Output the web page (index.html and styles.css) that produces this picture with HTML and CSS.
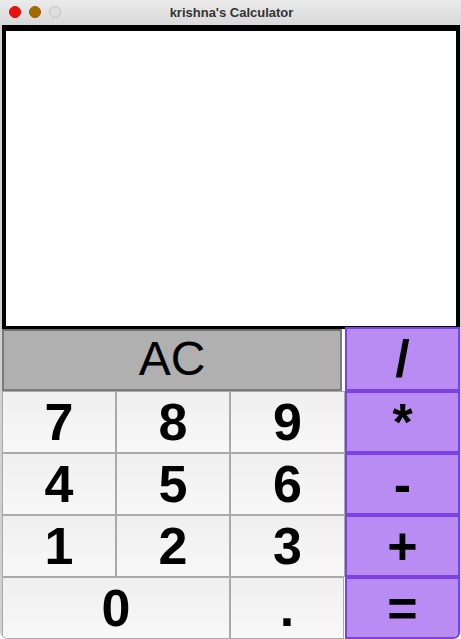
FILE: index.html
```html
<!DOCTYPE html>
<html>
<head>
<meta charset="utf-8">
<title>krishna's Calculator</title>
<link rel="stylesheet" href="styles.css">
</head>
<body>
<div class="window">
  <div class="titlebar">
    <div class="lights">
      <span class="light red"></span>
      <span class="light amber"></span>
      <span class="light off"></span>
    </div>
    <div class="title">krishna's Calculator</div>
  </div>
  <div class="content">
    <div class="display"></div>
    <div class="keys">
      <button class="key clear">AC</button>
      <button class="key op top">/</button>
      <button class="key num">7</button>
      <button class="key num">8</button>
      <button class="key num">9</button>
      <button class="key op">*</button>
      <button class="key num">4</button>
      <button class="key num">5</button>
      <button class="key num">6</button>
      <button class="key op">-</button>
      <button class="key num">1</button>
      <button class="key num">2</button>
      <button class="key num">3</button>
      <button class="key op">+</button>
      <button class="key num zero">0</button>
      <button class="key num dot">.</button>
      <button class="key op eq">=</button>
    </div>
  </div>
</div>
</body>
</html>
```

FILE: styles.css
```css
html, body {
  margin: 0;
  padding: 0;
  width: 461px;
  height: 639px;
  overflow: hidden;
  background: #ffffff;
}

.window {
  width: 461px;
  height: 639px;
  display: flex;
  flex-direction: column;
  background: #d4d4d4;
  border-radius: 0 0 8px 8px;
  overflow: hidden;
}

.titlebar {
  height: 25px;
  flex: none;
  position: relative;
  display: flex;
  align-items: center;
  justify-content: center;
  background: linear-gradient(#ebebeb, #d9d9d9);
}

.lights {
  position: absolute;
  left: 9px;
  top: 6px;
  display: flex;
  gap: 8px;
}

.light {
  width: 12px;
  height: 12px;
  border-radius: 50%;
  box-sizing: border-box;
}

.light.red { background: #f20d0d; border: 1px solid #d80a0a; }
.light.amber { background: #a66b00; border: 1px solid #915d00; }
.light.off { background: #dedede; border: 1px solid #c2c2c2; }

.title {
  font-family: "Liberation Sans", Arial, sans-serif;
  font-weight: bold;
  font-size: 13px;
  color: #333333;
  padding-left: 2px;
}

.content {
  flex: 1;
  display: flex;
  flex-direction: column;
  padding: 0 1px 0 2px;
  background: #d0d0d0;
}

.display {
  height: 304px;
  flex: none;
  box-sizing: border-box;
  background: #ffffff;
  border-style: solid;
  border-color: #000;
  border-width: 6px 4px 3px 4px;
}

.keys {
  display: grid;
  grid-template-columns: 114px 114px 115px 115px;
  grid-template-rows: repeat(5, 62px);
  background: #ffffff;
}

.key {
  margin: 0;
  padding: 0;
  box-sizing: border-box;
  display: flex;
  align-items: center;
  justify-content: center;
  font-family: "Liberation Sans", Arial, sans-serif;
  font-weight: bold;
  font-size: 52px;
  color: #000;
  line-height: 1;
  cursor: pointer;
}

.num {
  background: linear-gradient(#efefef, #f8f8f8);
  border: 1px solid #a9a9a9;
}

.dot {
  width: 114px;
}

.zero {
  grid-column: span 2;
  border-radius: 0 0 0 4px;
}

.clear {
  grid-column: span 3;
  margin: 0 3px 0 0;
  background: #b0b0b0;
  border: 2px solid #7a7a7a;
  border-top-color: #6e6e6e;
  font-weight: normal;
  font-size: 48px;
  padding-bottom: 2px;
}

.op {
  background: #b98cf4;
  border: 2px solid #7d40e2;
  width: 115px;
}

.op.top {
  margin-top: -2px;
  height: 64px;
}

.eq {
  border-radius: 0 0 6px 0;
}
```
